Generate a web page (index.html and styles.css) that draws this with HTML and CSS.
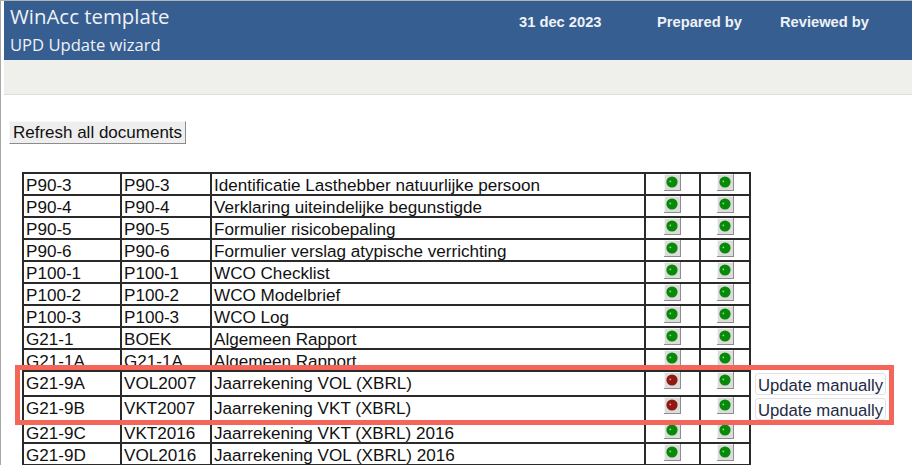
FILE: index.html
```html
<!DOCTYPE html>
<html lang="nl">
<head>
<meta charset="utf-8">
<title>UPD Update wizard</title>
<link rel="stylesheet" href="styles.css">
</head>
<body>
<svg class="defs" width="0" height="0" aria-hidden="true">
  <symbol id="led-green" viewBox="0 0 17 17">
    <rect x="0" y="0" width="17" height="17" fill="#8d8d8d"/>
    <rect x="0" y="0" width="16" height="16" fill="#f4f4f4"/>
    <rect x="1" y="1" width="15" height="15" fill="#dcdcdc"/>
    <circle cx="8" cy="8" r="5.6" fill="#078a07"/>
    <circle cx="6.3" cy="7.4" r="0.9" fill="#9ed49e"/>
  </symbol>
  <symbol id="led-red" viewBox="0 0 17 17">
    <rect x="0" y="0" width="17" height="17" fill="#8d8d8d"/>
    <rect x="0" y="0" width="16" height="16" fill="#f4f4f4"/>
    <rect x="1" y="1" width="15" height="15" fill="#dcdcdc"/>
    <circle cx="8" cy="8" r="5.6" fill="#8f1a12"/>
    <circle cx="6.3" cy="7.4" r="0.9" fill="#d9a3a0"/>
  </symbol>
</svg>
<div class="page">
  <header class="banner">
    <div class="titles">
      <div class="title">WinAcc template</div>
      <div class="subtitle">UPD Update wizard</div>
    </div>
    <div class="meta">
      <span class="date">31 dec 2023</span>
      <span class="prepared">Prepared by</span>
      <span class="reviewed">Reviewed by</span>
    </div>
  </header>
  <div class="subbar"></div>
  <main class="content">
    <button class="refresh" type="button">Refresh all documents</button>
    <div class="table-wrap">
      <table class="docs">
        <colgroup>
          <col class="c1"><col class="c2"><col class="c3"><col class="c4"><col class="c5"><col class="c6">
        </colgroup>
        <tbody>
          <tr><td>P90-3</td><td>P90-3</td><td>Identificatie Lasthebber natuurlijke persoon</td><td class="led"><svg><use href="#led-green"/></svg></td><td class="led"><svg><use href="#led-green"/></svg></td><td class="act"></td></tr>
          <tr><td>P90-4</td><td>P90-4</td><td>Verklaring uiteindelijke begunstigde</td><td class="led"><svg><use href="#led-green"/></svg></td><td class="led"><svg><use href="#led-green"/></svg></td><td class="act"></td></tr>
          <tr><td>P90-5</td><td>P90-5</td><td>Formulier risicobepaling</td><td class="led"><svg><use href="#led-green"/></svg></td><td class="led"><svg><use href="#led-green"/></svg></td><td class="act"></td></tr>
          <tr><td>P90-6</td><td>P90-6</td><td>Formulier verslag atypische verrichting</td><td class="led"><svg><use href="#led-green"/></svg></td><td class="led"><svg><use href="#led-green"/></svg></td><td class="act"></td></tr>
          <tr><td>P100-1</td><td>P100-1</td><td>WCO Checklist</td><td class="led"><svg><use href="#led-green"/></svg></td><td class="led"><svg><use href="#led-green"/></svg></td><td class="act"></td></tr>
          <tr><td>P100-2</td><td>P100-2</td><td>WCO Modelbrief</td><td class="led"><svg><use href="#led-green"/></svg></td><td class="led"><svg><use href="#led-green"/></svg></td><td class="act"></td></tr>
          <tr><td>P100-3</td><td>P100-3</td><td>WCO Log</td><td class="led"><svg><use href="#led-green"/></svg></td><td class="led"><svg><use href="#led-green"/></svg></td><td class="act"></td></tr>
          <tr><td>G21-1</td><td>BOEK</td><td>Algemeen Rapport</td><td class="led"><svg><use href="#led-green"/></svg></td><td class="led"><svg><use href="#led-green"/></svg></td><td class="act"></td></tr>
          <tr><td>G21-1A</td><td>G21-1A</td><td>Algemeen Rapport</td><td class="led"><svg><use href="#led-green"/></svg></td><td class="led"><svg><use href="#led-green"/></svg></td><td class="act"></td></tr>
          <tr class="tall"><td>G21-9A</td><td>VOL2007</td><td>Jaarrekening VOL (XBRL)</td><td class="led"><svg><use href="#led-red"/></svg></td><td class="led"><svg><use href="#led-green"/></svg></td><td class="act"><button class="manual" type="button">Update manually</button></td></tr>
          <tr class="tall"><td>G21-9B</td><td>VKT2007</td><td>Jaarrekening VKT (XBRL)</td><td class="led"><svg><use href="#led-red"/></svg></td><td class="led"><svg><use href="#led-green"/></svg></td><td class="act"><button class="manual" type="button">Update manually</button></td></tr>
          <tr><td>G21-9C</td><td>VKT2016</td><td>Jaarrekening VKT (XBRL) 2016</td><td class="led"><svg><use href="#led-green"/></svg></td><td class="led"><svg><use href="#led-green"/></svg></td><td class="act"></td></tr>
          <tr><td>G21-9D</td><td>VOL2016</td><td>Jaarrekening VOL (XBRL) 2016</td><td class="led"><svg><use href="#led-green"/></svg></td><td class="led"><svg><use href="#led-green"/></svg></td><td class="act"></td></tr>
        </tbody>
      </table>
      <div class="callout"></div>
    </div>
  </main>
</div>
</body>
</html>
```

FILE: styles.css
```css
html, body {
  margin: 0;
  padding: 0;
  height: 465px;
  overflow: hidden;
  background: #fff;
}
.defs { position: absolute; }
.page {
  height: 464px;
  border-top: 1px solid #b4b4b4;
  border-left: 1px solid #a8a8a8;
  padding-left: 3px;
  font-family: "Liberation Sans", Arial, sans-serif;
  overflow: hidden;
}
.banner {
  height: 59px;
  background: #375e91;
  color: #eef2f7;
  display: flex;
  justify-content: space-between;
}
.titles {
  padding: 3px 0 0 6px;
  font-family: "Open Sans", sans-serif;
}
.title { font-size: 20.4px; line-height: 25px; }
.subtitle { font-size: 16.6px; line-height: 22px; margin-top: 5px; }
.meta {
  display: flex;
  font-size: 14.7px;
  font-weight: 700;
  padding-top: 13px;
  line-height: 17px;
}
.date { width: 138px; }
.prepared { width: 123px; }
.reviewed { width: 132px; }
.subbar {
  height: 34px;
  background: #efefeb;
  border-bottom: 1px solid #dededa;
}
.content { padding: 26px 0 0 5px; }
.refresh {
  display: block;
  width: 177px;
  height: 23px;
  padding: 0;
  margin: 0;
  font: 17px/20px "Liberation Sans", Arial, sans-serif;
  color: #111;
  background: #eeeeee;
  border: 1px solid;
  border-color: #f8f8f8 #8c8c8c #8c8c8c #f8f8f8;
}
.table-wrap {
  position: relative;
  margin: 28px 0 0 13px;
}
.docs {
  border-collapse: collapse;
  table-layout: fixed;
  width: 870px;
  font-size: 17.1px;
  color: #111;
}
.c1 { width: 98px; }
.c2 { width: 90px; }
.c3 { width: 434px; }
.c4 { width: 55px; }
.c5 { width: 50px; }
.docs tr { height: 22px; }
.docs tr.tall { height: 25px; }
.docs td {
  border: 2px solid #2a2a2a;
  padding: 3px 0 0 2px;
  line-height: 17px;
  vertical-align: top;
  white-space: nowrap;
}
.docs td.led { padding: 0; text-align: center; }
.docs td.led svg { display: block; width: 17px; height: 17px; margin: 0 auto; }
.docs td.act { border: 0; padding: 0 0 0 4px; vertical-align: middle; }
.manual {
  display: block;
  width: 131px;
  height: 22px;
  padding: 2px 0 0;
  font: 16.7px/20px "Liberation Sans", Arial, sans-serif;
  color: #1d2a44;
  background: #fdfdfd;
  border: 1px solid #e2e2e2;
  border-radius: 3px;
}
.callout {
  position: absolute;
  left: -7px;
  top: 193px;
  width: 869px;
  height: 50px;
  border: 5px solid #f4665a;
}
```
